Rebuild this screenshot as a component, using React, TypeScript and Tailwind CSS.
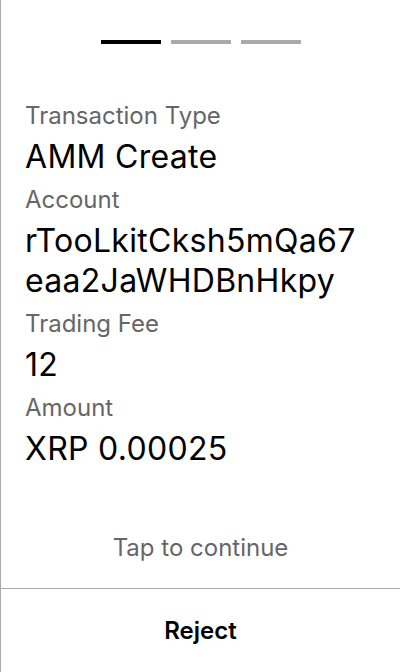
import React from "react";

const font = { fontFamily: "Inter, 'Noto Sans', sans-serif" };

function Field({ label, value }: { label: string; value: React.ReactNode }) {
  return (
    <div className="flex flex-col">
      <div className="text-[24px] leading-[28px] text-[#666666]">{label}</div>
      <div className="mt-[7px] mb-[9px] text-[32px] leading-[40px] tracking-[0.3px] text-black">{value}</div>
    </div>
  );
}

export default function App() {
  return (
    <div
      className="h-[672px] w-[400px] flex flex-col bg-white border-l border-[#aaaaaa] overflow-hidden"
      style={font}
    >
      <div className="pt-10 flex justify-center gap-[10px]">
        <div className="w-[60px] h-1 bg-black" />
        <div className="w-[60px] h-1 bg-[#aaaaaa]" />
        <div className="w-[60px] h-1 bg-[#aaaaaa]" />
      </div>
      <div className="mt-[58px] px-6 flex flex-col">
        <Field label="Transaction Type" value="AMM Create" />
        <Field
          label="Account"
          value={
            <>
              rTooLkitCksh5mQa67
              <br />
              eaa2JaWHDBnHkpy
            </>
          }
        />
        <Field label="Trading Fee" value="12" />
        <Field label="Amount" value="XRP 0.00025" />
      </div>
      <div className="flex-1" />
      <div className="text-center text-[24px] leading-[28px] text-[#666666] mb-[26px]">
        Tap to continue
      </div>
      <div className="h-[84px] border-t border-[#aaaaaa] flex items-center justify-center">
        <span className="text-[24px] font-semibold text-black">Reject</span>
      </div>
    </div>
  );
}
